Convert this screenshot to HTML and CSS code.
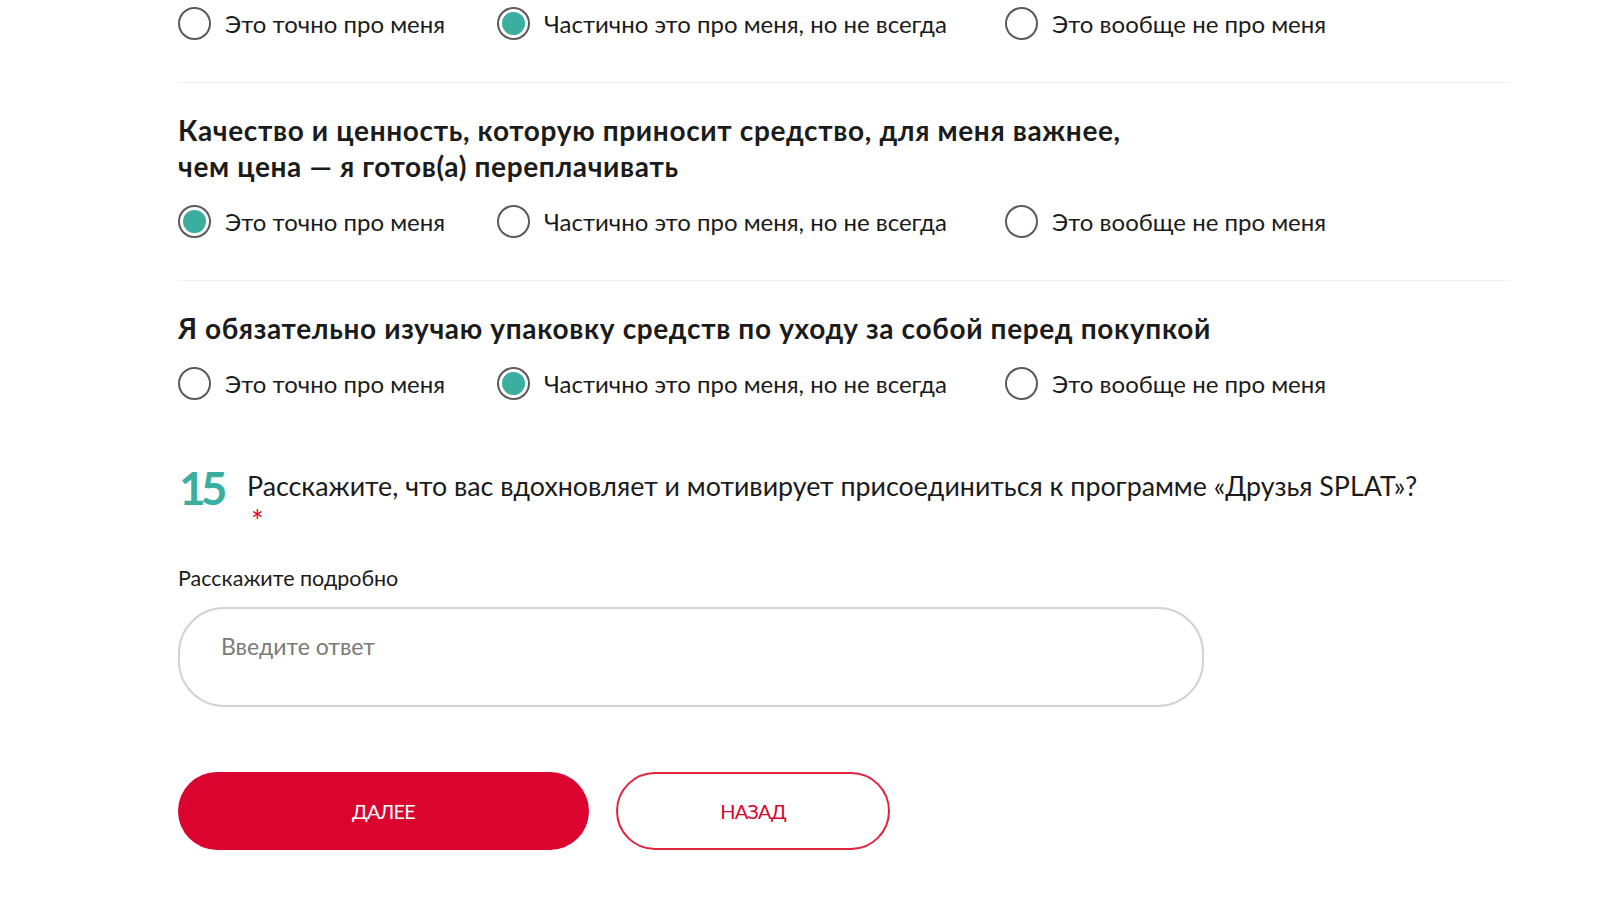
FILE: index.html
```html
<!DOCTYPE html>
<html lang="ru">
<head>
<meta charset="utf-8">
<title>Анкета</title>
<link rel="stylesheet" href="styles.css">
</head>
<body>
<main class="form">
  <section class="block">
    <div class="options">
      <label class="option"><span class="radio"></span><span class="opt-text">Это точно про меня</span></label>
      <label class="option"><span class="radio checked"></span><span class="opt-text">Частично это про меня, но не всегда</span></label>
      <label class="option"><span class="radio"></span><span class="opt-text">Это вообще не про меня</span></label>
    </div>
  </section>
  <section class="block">
    <h3 class="q-title">Качество и ценность, которую приносит средство, для меня важнее,<br>чем цена — я готов(а) переплачивать</h3>
    <div class="options">
      <label class="option"><span class="radio checked"></span><span class="opt-text">Это точно про меня</span></label>
      <label class="option"><span class="radio"></span><span class="opt-text">Частично это про меня, но не всегда</span></label>
      <label class="option"><span class="radio"></span><span class="opt-text">Это вообще не про меня</span></label>
    </div>
  </section>
  <section class="block last">
    <h3 class="q-title">Я обязательно изучаю упаковку средств по уходу за собой перед покупкой</h3>
    <div class="options">
      <label class="option"><span class="radio"></span><span class="opt-text">Это точно про меня</span></label>
      <label class="option"><span class="radio checked"></span><span class="opt-text">Частично это про меня, но не всегда</span></label>
      <label class="option"><span class="radio"></span><span class="opt-text">Это вообще не про меня</span></label>
    </div>
  </section>

  <section class="question">
    <div class="q-num">15</div>
    <div class="q-body">
      <div class="q-text">Расскажите, что вас вдохновляет и мотивирует присоединиться к программе «Друзья SPLAT»?</div>
      <div class="required">*</div>
    </div>
  </section>

  <div class="field">
    <div class="field-label">Расскажите подробно</div>
    <div class="textarea"><span class="placeholder">Введите ответ</span></div>
  </div>

  <div class="actions">
    <button class="btn btn-primary">ДАЛЕЕ</button>
    <button class="btn btn-outline">НАЗАД</button>
  </div>
</main>
</body>
</html>
```

FILE: styles.css
```css
html, body {
  margin: 0;
  padding: 0;
  background: #ffffff;
}
body {
  font-family: "Lato", "Noto Sans", sans-serif;
  color: #1b1b1b;
}
.form {
  padding: 7px 90px 0 178px;
}
.block {
  padding: 29px 0 42px;
  border-bottom: 1px solid #efefef;
  width: 1332px;
}
.block:first-child {
  padding-top: 0;
}
.block.last {
  border-bottom: none;
  padding-bottom: 0;
}
.q-title {
  margin: 0 0 21px;
  font-size: 28px;
  line-height: 36px;
  letter-spacing: 0.65px;
  font-weight: 700;
  color: #1b1b1b;
}
.options {
  display: grid;
  grid-template-columns: 319px 508px auto;
  align-items: center;
}
.option {
  display: flex;
  align-items: center;
  gap: 14px;
}
.radio {
  box-sizing: border-box;
  width: 33px;
  height: 33px;
  border: 2px solid #5a5a5a;
  border-radius: 50%;
  flex: none;
  position: relative;
  background: #fff;
}
.radio.checked::after {
  content: "";
  position: absolute;
  inset: 3px;
  border-radius: 50%;
  background: #3aafa0;
}
.opt-text {
  font-size: 24px;
  line-height: 33px;
  color: #1b1b1b;
}
.question {
  display: flex;
  margin-top: 68px;
}
.q-num {
  width: 68px;
  flex: none;
  font-size: 46px;
  line-height: 40px;
  font-weight: 700;
  letter-spacing: -5px;
  color: #3aafa0;
  margin-left: 1px;
}
.q-text {
  font-size: 26.8px;
  line-height: 36px;
  color: #1b1b1b;
}
.required {
  color: #dc052d;
  font-size: 30px;
  line-height: 24px;
  height: 24px;
  margin-left: 4px;
  padding-top: 4px;
}
.field {
  margin-top: 32px;
}
.field-label {
  font-size: 21.5px;
  line-height: 28px;
  color: #1b1b1b;
}
.textarea {
  box-sizing: border-box;
  margin-top: 15px;
  width: 1026px;
  height: 100px;
  border: 2px solid #d3d3d3;
  border-radius: 46px;
  padding: 22px 41px;
}
.placeholder {
  font-size: 23px;
  line-height: 30px;
  color: #7a7a7a;
}
.actions {
  display: flex;
  gap: 27px;
  margin-top: 65px;
}
.btn {
  box-sizing: border-box;
  height: 78px;
  border-radius: 39px;
  font-family: "Lato", "Noto Sans", sans-serif;
  font-size: 20px;
  letter-spacing: -0.8px;
  cursor: pointer;
}
.btn-primary {
  width: 411px;
  background: #da042e;
  border: none;
  color: #ffffff;
}
.btn-outline {
  width: 274px;
  background: #ffffff;
  border: 2px solid #e0233f;
  color: #da042e;
}
```
